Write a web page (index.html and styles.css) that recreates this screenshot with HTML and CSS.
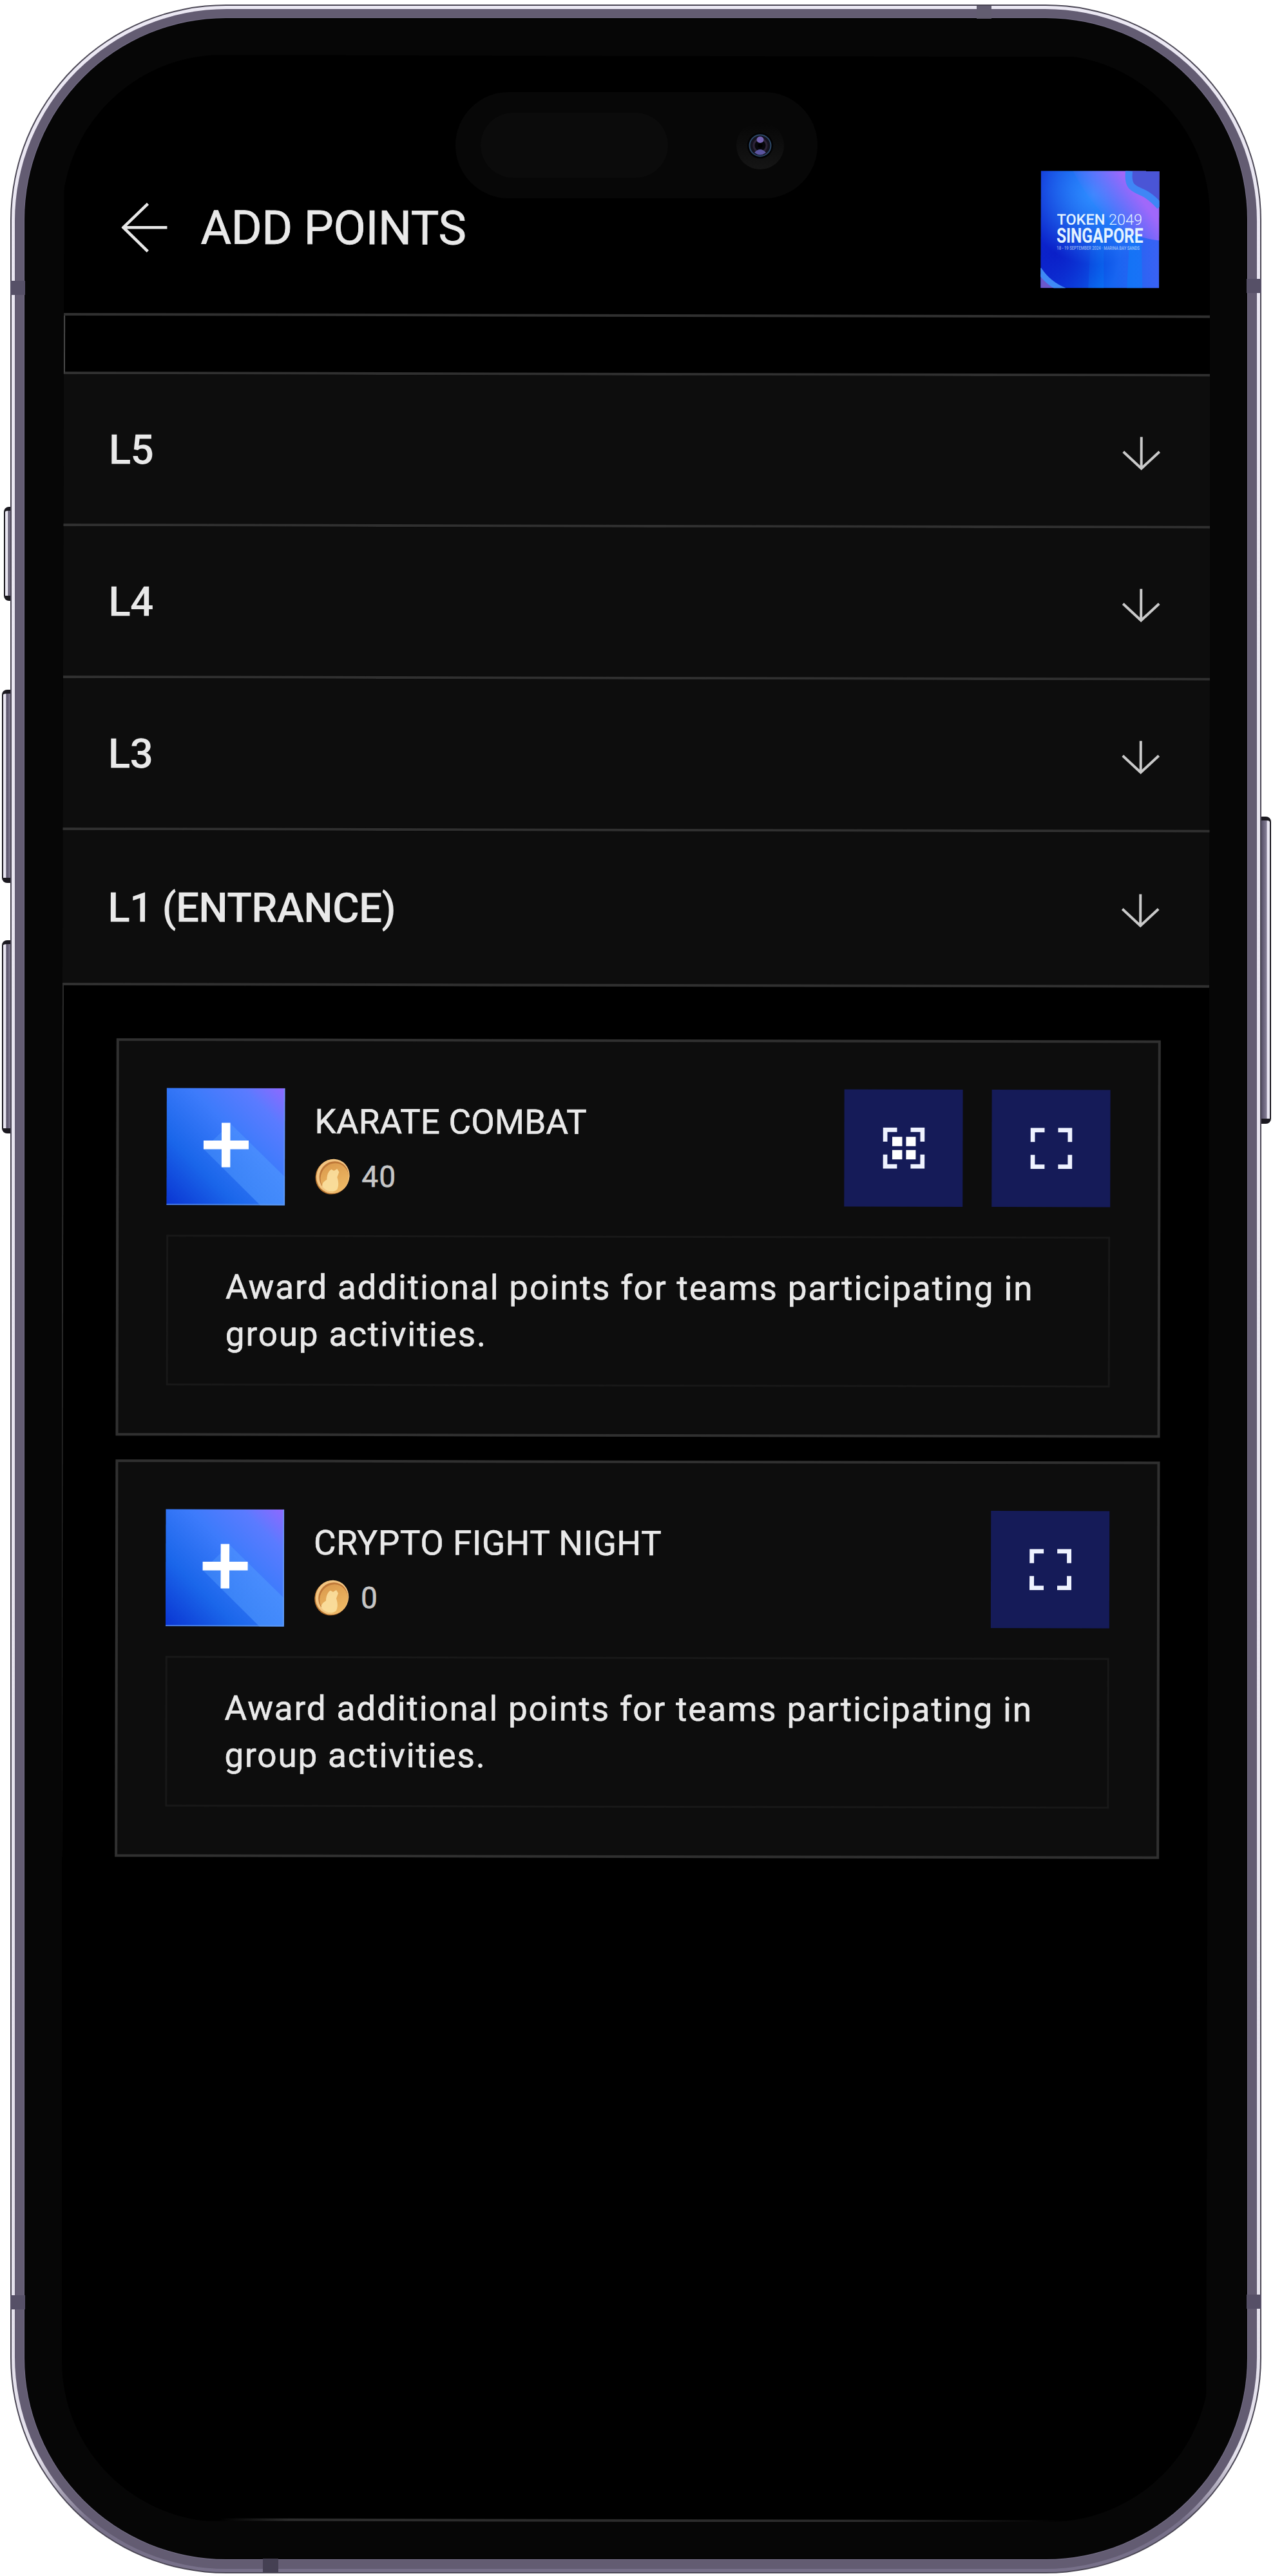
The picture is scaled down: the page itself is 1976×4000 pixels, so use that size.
FILE: index.html
```html
<!DOCTYPE html>
<html lang="en">
<head>
<meta charset="utf-8">
<title>Add Points</title>
<link rel="stylesheet" href="styles.css">
</head>
<body>
<svg class="defs" width="0" height="0" aria-hidden="true">
  <defs>
    <linearGradient id="tile" x1="0" y1="1" x2="1" y2="0">
      <stop offset="0" stop-color="#0a34d2"/>
      <stop offset=".3" stop-color="#1a66ea"/>
      <stop offset=".6" stop-color="#3d7bfb"/>
      <stop offset=".82" stop-color="#5a7bff"/>
      <stop offset="1" stop-color="#9068ff"/>
    </linearGradient>
    <linearGradient id="ray" x1="0" y1="0" x2="1" y2="1">
      <stop offset="0" stop-color="#5aa4ff" stop-opacity=".3"/>
      <stop offset="1" stop-color="#4c96ff" stop-opacity=".65"/>
    </linearGradient>
    <linearGradient id="coinFace" x1="0" y1="0" x2="1" y2="1">
      <stop offset="0" stop-color="#d9974a"/>
      <stop offset="1" stop-color="#f2c06a"/>
    </linearGradient>
    <symbol id="plus-tile" viewBox="0 0 184 182">
      <rect width="184" height="182" fill="url(#tile)"/>
      <path d="M99 55 184 138V182H146L58 95Z" fill="url(#ray)"/>
      <path d="M85.500 54h13.500v27.500h28.500v13.500H99v28H85.500V95h-28V81.500h28z" fill="#fff"/>
      <path d="M183 0v181H0" fill="none" stroke="#6aa2f5" stroke-width="2" opacity=".7"/>
    </symbol>
    <symbol id="coin" viewBox="0 0 56 56">
      <ellipse cx="27.500" cy="28.500" rx="26" ry="27.500" transform="rotate(25 27.500 28.500)" fill="#b8742e"/>
      <ellipse cx="28.500" cy="27.500" rx="25.500" ry="27" transform="rotate(25 28.500 27.500)" fill="#f3c581"/>
      <ellipse cx="30" cy="28" rx="22.500" ry="24" transform="rotate(25 30 28)" fill="#c07a3a"/>
      <ellipse cx="31" cy="30" rx="21.500" ry="23" transform="rotate(25 31 30)" fill="url(#coinFace)"/>
      <path d="M12 44c-1-5 3-9 7-11 0-7 2-13 7-16l4 2 5-3 3 5-3 8c2 6 3 12 0 19-6 6-17 4-23-4z" fill="#fbe0a0" opacity=".9"/>
    </symbol>
    <symbol id="arrow-down" viewBox="0 0 60 54">
      <path d="M30 1v49M2 24l28 26 28-26" fill="none" stroke="#c9c9c9" stroke-width="4"/>
    </symbol>
    <symbol id="scan" viewBox="0 0 65 64">
      <path d="M22 3.500H3.500V22M43 3.500h18.500V22M3.500 42v18.500H22M61.500 42v18.500H43" fill="none" stroke="#eef2ff" stroke-width="7"/>
    </symbol>
    <symbol id="scan-qr" viewBox="0 0 65 64">
      <use href="#scan"/>
      <path d="M14.500 14.500h15.500v14.500H14.500zM36 14.500h15v14.500H36zM14.500 35h15.500v14.500H14.500zM36 35h15v14.500H36z" fill="#fff"/>
    </symbol>
  </defs>
</svg>

<div class="phone">
  <i class="key key-action"></i>
  <i class="key key-up"></i>
  <i class="key key-down"></i>
  <i class="key key-power"></i>
  <div class="chrome"><div class="frame"><div class="bezel">
    <div class="screen">
      <main class="page">
        <header class="header">
          <svg class="back" viewBox="0 0 72 78"><path d="M71 39H3M41 2 3 39l38 37" fill="none" stroke="#e8e8e8" stroke-width="4.500"/></svg>
          <h1 class="title">ADD POINTS</h1>
          <svg class="event-logo" viewBox="0 0 184 182">
            <defs>
              <linearGradient id="lg" x1="0" y1="0" x2="1" y2="0">
                <stop offset="0" stop-color="#0f2fd4"/><stop offset=".5" stop-color="#0b66f0"/><stop offset="1" stop-color="#3a62f4"/>
              </linearGradient>
              <radialGradient id="lgGlow" cx=".45" cy=".2" r=".6">
                <stop offset="0" stop-color="#2f8cff"/><stop offset="1" stop-color="#2f8cff" stop-opacity="0"/>
              </radialGradient>
              <radialGradient id="lgDeep" cx=".12" cy=".7" r=".55">
                <stop offset="0" stop-color="#0a1fc8"/><stop offset="1" stop-color="#0a1fc8" stop-opacity="0"/>
              </radialGradient>
              <linearGradient id="lgPurple" gradientUnits="userSpaceOnUse" x1="95" y1="75" x2="150" y2="35">
                <stop offset="0" stop-color="#8f6cff" stop-opacity="0"/><stop offset="1" stop-color="#a068fa"/>
              </linearGradient>
            </defs>
            <rect width="184" height="182" fill="url(#lg)"/>
            <path d="M78 100h20v82H74zM138 100h18l2 82h-24z" fill="#0a80fa" opacity=".55"/>
            <rect width="184" height="182" fill="url(#lgDeep)"/>
            <rect width="184" height="182" fill="url(#lgGlow)"/>
            <path d="M50 0h134v108Q100 100 50 0z" fill="url(#lgPurple)"/>
            <path d="M136 0c-3 24 6 27 20 33 13 6 20 14 28 23V0z" fill="#4a55d6"/>
            <path d="M137 0c-3 24 6 27 20 33 12 5 20 13 28 22" fill="none" stroke="#3f86f6" stroke-width="11"/>
            <path d="M0 160q14 16 32 22H0z" fill="#6a58cc"/>
            <path d="M-3 153q14 22 40 33" fill="none" stroke="#3f8af5" stroke-width="9"/>
            <text class="logo-a" transform="translate(25 83.500) scale(1.02 1)">TOKEN</text>
            <text class="logo-b" transform="translate(105.500 83.500) scale(1.020 1)">2049</text>
            <text class="logo-c" transform="translate(24.500 111.500) scale(.765 1)">SINGAPORE</text>
            <text class="logo-d" transform="translate(25 122.500) scale(.74 1)">18 - 19 SEPTEMBER 2024 · MARINA BAY SANDS</text>
          </svg>
        </header>

        <div class="spacer"></div>

        <section class="floor"><h2>L5</h2><svg class="chev"><use href="#arrow-down"/></svg></section>
        <section class="floor"><h2>L4</h2><svg class="chev"><use href="#arrow-down"/></svg></section>
        <section class="floor"><h2>L3</h2><svg class="chev"><use href="#arrow-down"/></svg></section>
        <section class="floor floor-open"><h2>L1 (ENTRANCE)</h2><svg class="chev"><use href="#arrow-down"/></svg></section>

        <div class="cards">
          <article class="card">
            <div class="card-head">
              <svg class="tile"><use href="#plus-tile"/></svg>
              <div class="info">
                <h3 class="name karate">KARATE COMBAT</h3>
                <div class="points"><svg class="coin"><use href="#coin"/></svg><span>40</span></div>
              </div>
              <div class="actions">
                <div class="btn"><svg class="glyph"><use href="#scan-qr"/></svg></div>
                <div class="btn"><svg class="glyph"><use href="#scan"/></svg></div>
              </div>
            </div>
            <p class="desc">Award additional points for teams participating in<br>group activities.</p>
          </article>
          <article class="card">
            <div class="card-head">
              <svg class="tile"><use href="#plus-tile"/></svg>
              <div class="info">
                <h3 class="name">CRYPTO FIGHT NIGHT</h3>
                <div class="points"><svg class="coin"><use href="#coin"/></svg><span>0</span></div>
              </div>
              <div class="actions">
                <div class="btn"><svg class="glyph"><use href="#scan"/></svg></div>
              </div>
            </div>
            <p class="desc">Award additional points for teams participating in<br>group activities.</p>
          </article>
        </div>
        <div class="page-end"></div>
      </main>
    </div>
  </div></div></div>
  <i class="band band-l1"></i><i class="band band-l2"></i>
  <i class="band band-r1"></i><i class="band band-r2"></i>
  <i class="band band-t"></i><i class="band band-b"></i>
  <div class="island">
    <div class="sensor"></div>
    <svg class="lens" viewBox="0 0 74 74">
      <defs><linearGradient id="lens" x1="0" y1="0" x2="0" y2="1"><stop offset="0" stop-color="#060606"/><stop offset="1" stop-color="#151515"/></linearGradient></defs>
      <circle cx="37" cy="37" r="37" fill="url(#lens)"/>
      <circle cx="37" cy="37" r="20" fill="#020203"/>
      <circle cx="37" cy="37" r="16.500" fill="#14131f" stroke="#2b4766" stroke-width="2"/>
      <circle cx="37" cy="37" r="10" fill="#07070c" stroke="#2c2336" stroke-width="3"/>
      <ellipse cx="37" cy="28" rx="5.500" ry="5" fill="#7463b4"/>
      <path d="M28 48q9-10 18 0-9 7-18 0z" fill="#5a55a0"/>
      <circle cx="37" cy="37" r="3.500" fill="#000"/>
    </svg>
  </div>
</div>
</body>
</html>
```
FILE: styles.css
```css
* { box-sizing: border-box; }
body {
  margin: 0;
  background: #fff;
  font-family: Roboto, "Liberation Sans", sans-serif;
  color: #e9e9e9;
}
h1, h2, h3, p { margin: 0; font-weight: 400; }
svg { display: block; flex: none; }
.defs { position: absolute; }

/* Device body */
.phone {
  position: relative;
  width: 1942px;
  height: 3989px;
  margin: 7px 0 4px 16px;
  padding: 2px;
  border-radius: 335px;
  background: #4b4755;
}
.chrome {
  height: 100%;
  padding: 5px;
  border-radius: 333px;
  background: linear-gradient(#ebe8f3 0, #e4e1ec 95.5%, #777089 98%);
}
.frame {
  height: 100%;
  padding: 14px 15px 15px;
  border-radius: 329px;
  background: #635c72;
}
.bezel {
  height: 100%;
  padding: 57px 58px 58px;
  border-radius: 313px;
  background: #060606;
  box-shadow: 0 0 0 1px #77708a;
}
.screen {
  height: 100%;
  padding-left: 4px;
  border-radius: 250px;
  overflow: hidden;
}

/* Antenna bands and side keys sit on top of the frame */
.band { position: absolute; background: #565067; }
.band-l1, .band-l2, .band-r1, .band-r2 { width: 23px; height: 22px; }
.band-l1 { left: 0; top: 429px; }
.band-l2 { left: 0; top: 3557px; }
.band-r1 { right: 0; top: 426px; }
.band-r2 { right: 0; top: 3556px; }
.band-t { left: 1500px; top: 2px; width: 23px; height: 20px; background: #625d70; }
.band-b { left: 392px; bottom: 2px; width: 24px; height: 21px; background: #454053; }
.key {
  position: absolute;
  right: 100%;
  width: 13px;
  border: solid #1b1920;
  border-width: 6px 0 8px 2px;
  border-radius: 8px 0 0 8px;
  background: linear-gradient(90deg, #e9e6f2 0 4px, #565067 5px, #857e95);
}
.key-action { top: 780px; height: 146px; width: 10px; }
.key-up { top: 1064px; height: 300px; }
.key-down { top: 1453px; height: 300px; }
.key-power {
  top: 1261px;
  right: auto;
  left: 100%;
  width: 15px;
  height: 477px;
  border-width: 6px 2px 8px 0;
  border-radius: 0 8px 8px 0;
  background: linear-gradient(270deg, #e9e6f2 0 4px, #857e95 5px, #565067);
}

.island {
  position: absolute;
  left: 691px;
  top: 136px;
  width: 562px;
  height: 165px;
  padding: 0 52px 0 39px;
  border-radius: 83px;
  background: #070707;
  display: flex;
  align-items: center;
  justify-content: space-between;
}
.sensor { width: 291px; height: 101px; border-radius: 51px; background: #0b0b0b; }
.lens { width: 74px; height: 74px; }

/* App page, turned very slightly clockwise inside the device */
.page {
  display: flex;
  flex-direction: column;
  width: 1780px;
  height: 3829px;
  background: #000;
  transform: rotate(.12deg);
  transform-origin: 0 0;
}
.header {
  display: flex;
  align-items: center;
  height: 405px;
  padding: 134px 80px 0 89px;
  border-bottom: 4px solid #303030;
}
.back { width: 72px; height: 78px; }
.title {
  margin-left: 51px;
  font-size: 73px;
  line-height: 86px;
  letter-spacing: -.3px;
  -webkit-text-stroke: .8px currentColor;
}
.event-logo { width: 184px; height: 182px; margin-left: auto; }
.event-logo text { fill: #e4f3ff; }
.logo-a { font: 500 23px Roboto, sans-serif; }
.logo-b { font: 300 23px Roboto, sans-serif; }
.logo-c { font: 700 32px Roboto, sans-serif; }
.logo-d { font: 500 8px Roboto, sans-serif; opacity: .6; }

.spacer {
  height: 91px;
  border-left: 2px solid #484848;
  border-bottom: 4px solid #303030;
}
.floor {
  display: flex;
  align-items: center;
  justify-content: space-between;
  height: 236px;
  padding: 0 77px 0 70px;
  border-bottom: 4px solid #303030;
  background: #0d0d0d;
}
.floor-open { height: 241px; }
.floor h2 {
  font-size: 64px;
  line-height: 76px;
  font-weight: 500;
  letter-spacing: -.8px;
  padding-top: 4px;
}
.chev { width: 60px; height: 54px; margin-top: 7px; }

.cards {
  display: flex;
  flex-direction: column;
  gap: 37px;
  padding: 82px 75px 0 82px;
  border-left: 2px solid #2c2c2c;
}
.card {
  height: 617px;
  padding: 73px 74px;
  border: 4px solid #303030;
  background: #0d0d0d;
}
.card-head { display: flex; height: 182px; }
.tile { width: 184px; height: 182px; }
.info { margin-left: 46px; }
.name {
  margin-top: 21px;
  font-size: 53px;
  line-height: 62px;
  letter-spacing: .6px;
  -webkit-text-stroke: .6px currentColor;
}
.karate { letter-spacing: .2px; }
.points {
  display: flex;
  align-items: center;
  gap: 17px;
  margin-top: 24px;
  font-size: 46px;
  line-height: 60px;
  letter-spacing: 1px;
  color: #c6c6c6;
  -webkit-text-stroke: .6px currentColor;
}
.coin { width: 56px; height: 56px; }
.actions { display: flex; gap: 45px; margin-left: auto; }
.btn {
  display: flex;
  align-items: center;
  justify-content: center;
  width: 184px;
  height: 182px;
  background: #151b58;
}
.glyph { width: 65px; height: 64px; }
.desc {
  height: 234px;
  margin-top: 46px;
  padding: 42px 0 0 89px;
  border: 3px solid #181818;
  font-size: 53px;
  line-height: 73px;
  letter-spacing: 1.85px;
  white-space: nowrap;
  -webkit-text-stroke: .6px currentColor;
}
/* Hairline at the bottom, fading out towards the rounded corners */
.page-end {
  flex: 1;
  background: linear-gradient(90deg, transparent 14%, #2c2c2c 20% 70%, transparent 88%) bottom / 100% 4px no-repeat;
}
```
